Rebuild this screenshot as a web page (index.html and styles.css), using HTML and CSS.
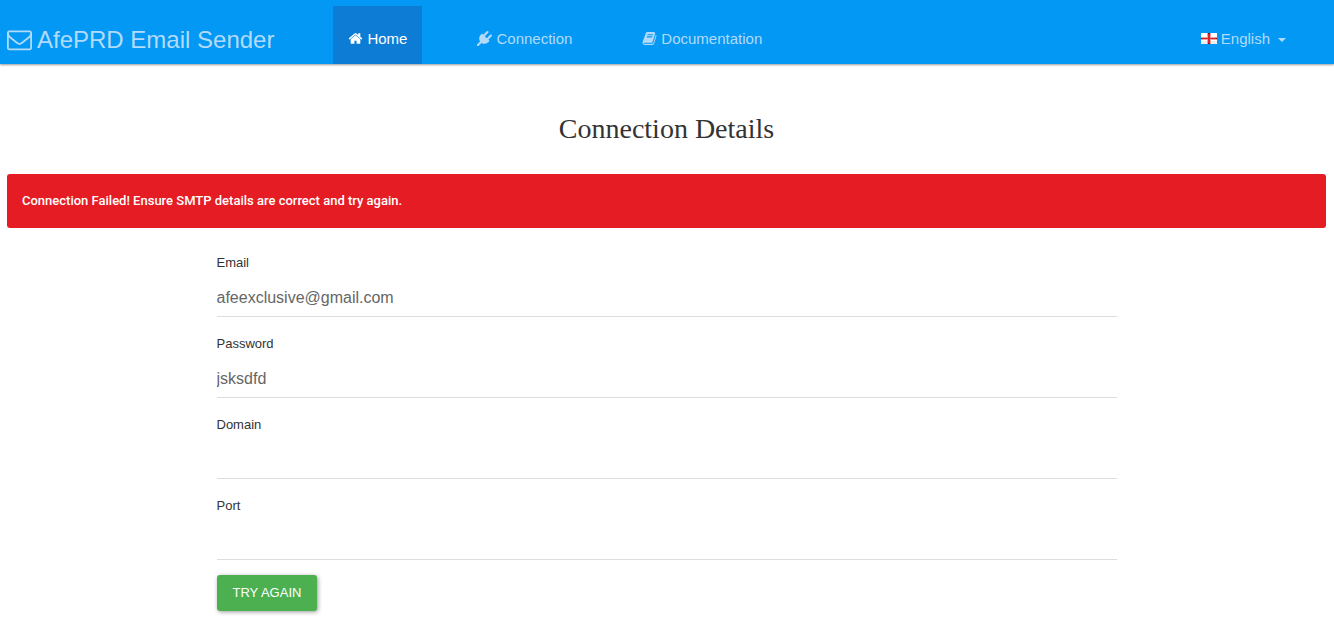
FILE: index.html
```html
<!DOCTYPE html>
<html lang="en">
<head>
<meta charset="utf-8">
<meta name="viewport" content="width=device-width, initial-scale=1">
<title>AfePRD Email Sender</title>
<link rel="stylesheet" href="styles.css">
</head>
<body>
<header class="navbar">
  <a class="brand" href="#">
    <svg class="brand-icon" viewBox="0 0 1792 1792" aria-hidden="true"><path d="M1664 1504v-768q-32 36-69 66-268 206-426 338-51 43-83 67t-86.500 48.500-102.500 24.500h-2q-48 0-102.500-24.500t-86.500-48.500-83-67q-158-132-426-338-37-30-69-66v768q0 13 9.500 22.500t22.500 9.500h1472q13 0 22.500-9.500t9.500-22.500zm0-1051v-24.500l-.5-13-3-12.500-5.500-9-9-7.500-14-2.500h-1472q-13 0-22.500 9.500t-9.500 22.500q0 168 147 284 193 152 401 317 6 5 35 29.500t46 37.500 44.500 31.500 50.500 27.500 43 9h2q20 0 43-9t50.500-27.500 44.500-31.500 46-37.500 35-29.500q208-165 401-317 54-43 100.500-115.500t46.500-131.500zm128-37v1088q0 66-47 113t-113 47h-1472q-66 0-113-47t-47-113v-1088q0-66 47-113t113-47h1472q66 0 113 47t47 113z"/></svg>
    <span>AfePRD Email Sender</span>
  </a>
  <nav class="nav">
    <a class="nav-link active" href="#" aria-current="page">
      <svg class="icon" viewBox="0 0 1792 1792" aria-hidden="true"><path d="M1472 992v480q0 26-19 45t-45 19h-384v-384h-256v384h-384q-26 0-45-19t-19-45v-480q0-1 .5-3t.5-3l575-474 575 474q1 2 1 6zm223-69l-62 74q-8 9-21 11h-3q-13 0-21-7l-692-577-692 577q-12 8-24 7-13-2-21-11l-62-74q-8-10-7-23.500t11-21.500l719-599q32-26 76-26t76 26l244 204v-195q0-14 9-23t23-9h192q14 0 23 9t9 23v408l219 182q10 8 11 21.500t-7 23.500z"/></svg>
      <span>Home</span>
    </a>
    <a class="nav-link" href="#">
      <svg class="icon" viewBox="0 0 1792 1792" aria-hidden="true"><path d="M1755 453q37 38 37 90.500t-37 90.500l-401 400 150 150-160 160q-163 163-389.500 186.500t-411.500-100.500l-362 362h-181v-181l362-362q-124-185-100.500-411.500t186.500-389.500l160-160 150 150 400-401q38-37 91-37t90 37 37 90.500-37 90.500l-400 401 234 234 401-400q38-37 91-37t90 37z"/></svg>
      <span>Connection</span>
    </a>
    <a class="nav-link" href="#">
      <svg class="icon" viewBox="0 0 1792 1792" aria-hidden="true"><path d="M1703 478q40 57 18 129l-275 906q-19 64-76.500 107.500t-122.500 43.500h-923q-77 0-148.500-53.500t-99.500-131.500q-24-67-2-127 0-4 3-27t4-37q1-8-3-21.500t-3-19.500q2-11 8-21t16.500-23.500 16.500-23.500q23-38 45-91.500t30-91.500q3-10 .5-30t-.5-28q3-11 17-28t17-23q21-36 42-92t25-90q1-9-2.500-32t.5-28q4-13 22-30.500t22-22.500q19-26 42.500-84.500t27.500-96.500q1-8-3-25.500t-2-26.500q2-8 9-18t18-23 17-21q8-12 16.500-30.500t15-35 16-36 19.500-32 26.500-23.500 36-11.500 47.500 5.500l-1 3q38-9 51-9h761q74 0 114 56t18 130l-274 906q-36 119-71.500 153.500t-128.500 34.500h-869q-27 0-38 15-11 16-1 43 24 70 144 70h923q29 0 56-15.500t35-41.500l300-987q7-22 5-57 38 15 59 43zm-1064 2q-4 13 2 22.500t20 9.500h608q13 0 25.500-9.500t16.500-22.500l21-64q4-13-2-22.500t-20-9.500h-608q-13 0-25.500 9.500t-16.500 22.500zm-83 256q-4 13 2 22.500t20 9.500h608q13 0 25.500-9.500t16.500-22.500l21-64q4-13-2-22.500t-20-9.500h-608q-13 0-25.500 9.500t-16.500 22.500z"/></svg>
      <span>Documentation</span>
    </a>
  </nav>
  <button class="nav-link language" type="button" aria-haspopup="true">
    <svg class="flag" viewBox="0 0 16 11" shape-rendering="crispEdges" aria-hidden="true"><path fill="#fff" d="M0 0h16v11H0z"/><path fill="#ececec" d="M0 8h16v3H0z"/><path fill="#e8a0a0" d="M0 4h16v3H0zM6 0h4v11H6z"/><path fill="#d8252b" d="M0 5h16v1H0zM7 0h2v11H7z"/><path fill="#8e1015" d="M7 0h2v1H7zM7 10h2v1H7zM0 5h1v1H0zM15 5h1v1h-1z"/></svg>
    <span>English</span>
    <span class="caret"></span>
  </button>
</header>
<main class="page">
  <h1 class="title">Connection Details</h1>
  <div class="alert" role="alert">Connection Failed! Ensure SMTP details are correct and try again.</div>
  <form class="form">
    <div class="field">
      <label for="email">Email</label>
      <input id="email" type="text" value="afeexclusive@gmail.com">
    </div>
    <div class="field">
      <label for="password">Password</label>
      <input id="password" type="text" value="jsksdfd">
    </div>
    <div class="field">
      <label for="domain">Domain</label>
      <input id="domain" type="text">
    </div>
    <div class="field">
      <label for="port">Port</label>
      <input id="port" type="text">
    </div>
    <button class="submit" type="button">Try again</button>
  </form>
</main>
</body>
</html>
```
FILE: styles.css
```css
* {
  box-sizing: border-box;
}

body {
  margin: 0;
  background: #fff;
  color: #333;
  font: 13px/18px "Liberation Sans", Arial, sans-serif;
}

.navbar {
  display: flex;
  align-items: stretch;
  min-height: 64px;
  padding: 6px 33px 0 7px;
  background: #0398f3;
  box-shadow: 0 1px 2px rgba(0, 0, 0, 0.4);
}

.brand {
  display: flex;
  align-items: center;
  gap: 5px;
  margin-right: 59px;
  padding-top: 9px;
  color: #b2dbfb;
  font-size: 24px;
  line-height: 28px;
  text-decoration: none;
}

.brand-icon {
  width: 25px;
  height: 25px;
  fill: currentColor;
}

.nav {
  display: flex;
  gap: 40px;
}

.nav-link {
  display: flex;
  align-items: center;
  gap: 4px;
  padding: 8px 15px 0;
  border: 0;
  background: none;
  color: #b2dbfb;
  font: 15px/20px "Liberation Sans", Arial, sans-serif;
  text-decoration: none;
}

.active {
  background: #0c7cd5;
  color: #fff;
}

.icon {
  width: 15px;
  height: 15px;
  margin-bottom: 2px;
  fill: currentColor;
}

.language {
  margin-left: auto;
}

.flag {
  width: 16px;
  height: 11px;
  margin-bottom: 2px;
}

.caret {
  margin: 2px 0 0 4px;
  border: 4px solid transparent;
  border-top-color: currentColor;
  border-bottom: 0;
}

.page {
  padding: 47px 8px 16px 7px;
}

.title {
  margin: 0 0 27px;
  font: 400 28px/36px "Liberation Serif", "Times New Roman", serif;
  text-align: center;
}

.alert {
  padding: 18px 15px;
  border-radius: 3px;
  background: #e51c23;
  color: #fff;
  font-family: Roboto, "Liberation Sans", sans-serif;
  font-weight: 500;
}

.form {
  max-width: 900px;
  margin: 25px auto 0;
}

.field {
  display: flex;
  flex-direction: column;
  gap: 6px;
  margin-bottom: 17px;
}

.field label {
  line-height: 20px;
}

.field input {
  width: 100%;
  height: 38px;
  padding: 0;
  border: 0;
  border-bottom: 1px solid #ddd;
  border-radius: 0;
  outline: 0;
  background: transparent;
  color: #666;
  font: 16px/24px "Liberation Sans", Arial, sans-serif;
}

.submit {
  display: block;
  margin-top: -2px;
  padding: 9px 16px;
  border: 0;
  border-radius: 3px;
  background: #4caf50;
  color: #fff;
  font: 13px/18px "Liberation Sans", Arial, sans-serif;
  text-transform: uppercase;
  box-shadow: 1px 1px 4px rgba(0, 0, 0, 0.4);
}
```
